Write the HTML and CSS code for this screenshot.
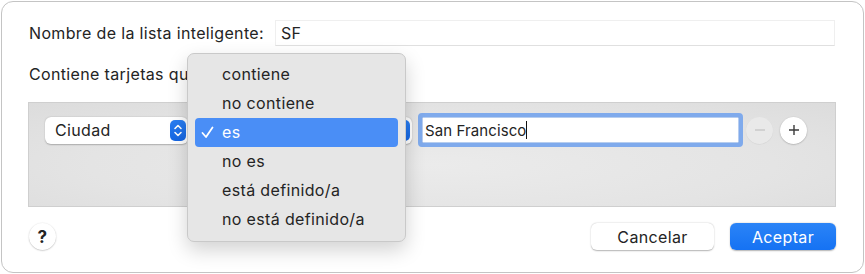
FILE: index.html
```html
<!DOCTYPE html>
<html lang="es">
<head>
  <meta charset="utf-8">
  <title>Nueva lista inteligente</title>
  <link rel="stylesheet" href="styles.css">
</head>
<body>
  <div class="window">
    <div class="name-row">
      <label class="label" for="list-name">Nombre de la lista inteligente:</label>
      <div class="name-field" id="list-name">SF</div>
    </div>

    <p class="label rule-title">Contiene tarjetas que</p>

    <div class="rules">
      <div class="rule">
        <div class="popup popup-field">
          <span>Ciudad</span>
          <span class="stepper">
            <svg width="16" height="21" viewBox="0 0 16 21"><path d="M5 8.5 L8 5.5 L11 8.5 M5 12.5 L8 15.5 L11 12.5" fill="none" stroke="#fff" stroke-width="1.6" stroke-linecap="round" stroke-linejoin="round"/></svg>
          </span>
        </div>
        <div class="popup popup-op">
          <span></span>
          <span class="stepper">
            <svg width="16" height="21" viewBox="0 0 16 21"><path d="M5 8.5 L8 5.5 L11 8.5 M5 12.5 L8 15.5 L11 12.5" fill="none" stroke="#fff" stroke-width="1.6" stroke-linecap="round" stroke-linejoin="round"/></svg>
          </span>
        </div>
        <div class="value-field">
          <span>San Francisco</span><span class="caret"></span>
        </div>
        <button class="round-btn disabled">
          <svg width="12" height="12" viewBox="0 0 12 12"><path d="M1 6 H11" stroke="#c9c9c9" stroke-width="1.4"/></svg>
        </button>
        <button class="round-btn">
          <svg width="12" height="12" viewBox="0 0 12 12"><path d="M1 6 H11 M6 1 V11" stroke="#3a3a3a" stroke-width="1.4"/></svg>
        </button>
      </div>
    </div>

    <div class="footer">
      <button class="help">?</button>
      <div class="actions">
        <button class="btn">Cancelar</button>
        <button class="btn btn-primary">Aceptar</button>
      </div>
    </div>

    <ul class="menu">
      <li class="menu-item">contiene</li>
      <li class="menu-item">no contiene</li>
      <li class="menu-item selected">
        <svg class="check" width="13" height="13" viewBox="0 0 13 13"><path d="M1.5 7 L5 11 L11.5 1.5" fill="none" stroke="#fff" stroke-width="1.8" stroke-linecap="round" stroke-linejoin="round"/></svg>
        es
      </li>
      <li class="menu-item">no es</li>
      <li class="menu-item">está definido/a</li>
      <li class="menu-item">no está definido/a</li>
    </ul>
  </div>
</body>
</html>
```

FILE: styles.css
```css
* {
  margin: 0;
  padding: 0;
  box-sizing: border-box;
}

body {
  background-color: #FFFFFF;
  color: #242424;
  font-family: "Inter", "Liberation Sans", sans-serif;
  font-size: 16px;
  letter-spacing: 0.35px;
}

button {
  font: inherit;
  letter-spacing: inherit;
  color: inherit;
  border: none;
  background: none;
}

.window {
  position: relative;
  margin: 1px;
  width: 863px;
  height: 272px;
  padding: 0 27px 0 26px;
  border: 1px solid #C4C4C4;
  border-radius: 12px;
  background-color: #FFFFFF;
  overflow: hidden;
}

.label {
  padding-left: 1px;
  white-space: nowrap;
}

.name-row {
  display: flex;
  align-items: center;
  gap: 11px;
  margin-top: 18px;
  height: 26px;
}

.name-field {
  flex: 1;
  height: 26px;
  margin-right: 1px;
  padding: 3px 5px;
  border: 1px solid #EFEFEF;
  border-bottom-color: #E0E0E0;
  line-height: 18px;
}

.rule-title {
  margin-top: 16px;
  height: 24px;
  line-height: 24px;
}

.rules {
  margin-top: 16px;
  height: 105px;
  padding: 10px 0 0 16px;
  border: 1px solid #CFCFCF;
  background: radial-gradient(ellipse at 50% 60%, #EBEBEB 0%, #E4E4E4 60%, #DCDCDC 100%);
}

.rule {
  display: flex;
  align-items: center;
  height: 34px;
}

.popup {
  display: flex;
  align-items: center;
  justify-content: space-between;
  height: 27px;
  padding: 0 2px 0 10px;
  border-radius: 6px;
  background-color: #FFFFFF;
  box-shadow: 0 0.5px 1.5px rgba(0, 0, 0, 0.25);
}

.popup-field {
  width: 143px;
}

.popup-op {
  width: 200px;
  margin-left: 24px;
}

.stepper {
  display: flex;
  width: 16px;
  height: 21px;
  border-radius: 5px;
  background: linear-gradient(#2A7EF2, #1566E3);
}

.value-field {
  display: flex;
  align-items: center;
  width: 325px;
  height: 34px;
  margin-left: 6px;
  padding: 0 3px;
  border: 4px solid #7FAAEC;
  border-radius: 4px;
  background-color: #FFFFFF;
  box-shadow: inset 0 0 0 0.5px #6F9BE0;
  font-size: 15px;
  letter-spacing: 0.1px;
}

.caret {
  width: 1px;
  height: 18px;
  background-color: #111111;
}

.round-btn {
  display: flex;
  align-items: center;
  justify-content: center;
  width: 27px;
  height: 27px;
  margin-left: 7px;
  border-radius: 50%;
  background-color: #FFFFFF;
  box-shadow: 0 0.5px 1.5px rgba(0, 0, 0, 0.3);
}

.round-btn.disabled {
  margin-left: 3px;
  background-color: #E9E9E9;
  box-shadow: 0 0.5px 1px rgba(0, 0, 0, 0.08);
}

.footer {
  display: flex;
  align-items: center;
  justify-content: space-between;
  margin-top: 16px;
  height: 27px;
}

.help {
  width: 27px;
  height: 27px;
  margin-left: 1px;
  border-radius: 50%;
  background-color: #FFFFFF;
  box-shadow: 0 0.5px 1.5px rgba(0, 0, 0, 0.3);
  font-size: 17px;
  font-weight: 700;
}

.actions {
  display: flex;
  gap: 16px;
}

.btn {
  height: 27px;
  border-radius: 6px;
  background-color: #FFFFFF;
  box-shadow: 0 0.5px 1.5px rgba(0, 0, 0, 0.3);
}

.btn:first-child {
  width: 123px;
}

.btn-primary {
  width: 106px;
  color: #FFFFFF;
  background: linear-gradient(#2B84F7, #1572F3);
}

.menu {
  position: absolute;
  left: 185px;
  top: 51px;
  width: 219px;
  height: 189px;
  padding: 6px 7px;
  list-style: none;
  border: 1px solid #C9C9C9;
  border-radius: 7px;
  background-color: #E6E6E6;
  box-shadow: 0 8px 20px rgba(0, 0, 0, 0.18);
}

.menu-item {
  position: relative;
  height: 29px;
  padding-left: 27px;
  line-height: 29px;
  border-radius: 4px;
}

.menu-item.selected {
  color: #FFFFFF;
  background-color: #4A8EF6;
}

.check {
  position: absolute;
  left: 6px;
  top: 8px;
}
```
